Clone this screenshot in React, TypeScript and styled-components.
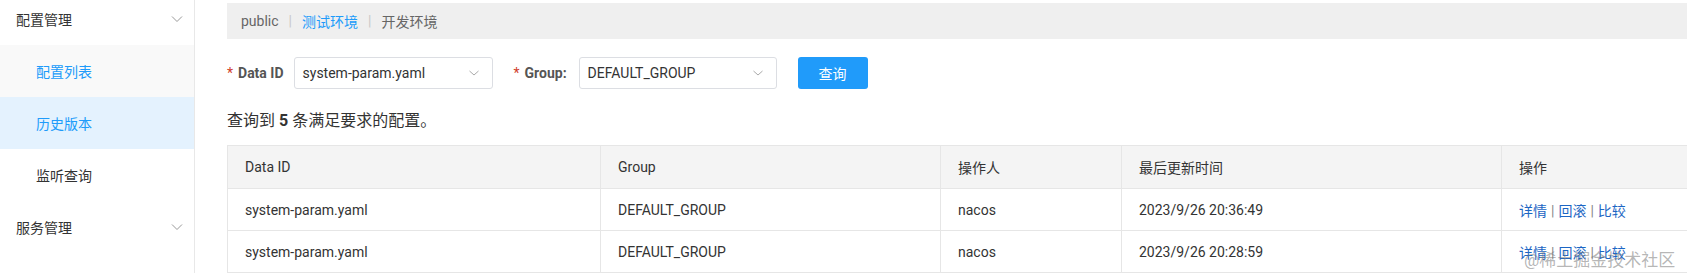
import React from "react";
import styled, { createGlobalStyle } from "styled-components";

const Global = createGlobalStyle`
  html, body { margin: 0; padding: 0; background: #fff; overflow: hidden; }
  body { font-family: Roboto, "Noto Sans CJK SC", sans-serif; color: #333; }
  * { box-sizing: border-box; }
`;

const Page = styled.div`
  position: relative;
  display: flex;
  width: 1740px;
  height: 273px;
  overflow: hidden;
`;

const Sidebar = styled.nav`
  width: 195px;
  flex: none;
  border-right: 1px solid #e8e8e8;
  background: #fff;
`;

const MenuList = styled.ul`
  list-style: none;
  margin: -7px 0 0;
  padding: 0;
`;

const MenuItem = styled.li<{ $sub?: boolean; $active?: boolean; $hover?: boolean }>`
  height: 52px;
  display: flex;
  align-items: center;
  justify-content: space-between;
  padding: 0 11px 0 ${(p) => (p.$sub ? "36px" : "16px")};
  font-size: 14px;
  color: ${(p) => (p.$sub && (p.$active || p.$hover) ? "#209bfa" : "#333")};
  background: ${(p) => (p.$active ? "#e4f2fe" : p.$hover ? "#f9f9f9" : "transparent")};
`;

const Chevron = () => (
  <svg width="12" height="8" viewBox="0 0 12 8" fill="none">
    <path d="M1 1.5 L6 6.5 L11 1.5" stroke="#999" strokeWidth="1" />
  </svg>
);

const Main = styled.main`
  flex: 1;
  padding: 3px 0 0 32px;
  display: flex;
  flex-direction: column;
`;

const Breadcrumb = styled.div`
  height: 40px;
  background: #efefef;
  display: flex;
  align-items: center;
  padding-left: 14px;
  font-size: 14px;
  color: #666;
`;

const Crumb = styled.span<{ $link?: boolean }>`
  color: ${(p) => (p.$link ? "#209bfa" : "#666")};
`;

const Sep = styled.span`
  color: #c8c8c8;
  margin: 0 10px;
`;

const FormRow = styled.div`
  display: flex;
  align-items: center;
  margin-top: 18px;
  height: 32px;
`;

const Label = styled.label<{ $gap: number }>`
  font-size: 14px;
  font-weight: bold;
  color: #555;
  margin-right: ${(p) => p.$gap}px;
  white-space: nowrap;
`;

const Star = styled.span`
  color: #d0402c;
  font-weight: normal;
  margin-right: 5px;
`;

const Select = styled.div<{ $width: number; $after: number }>`
  width: ${(p) => p.$width}px;
  height: 32px;
  border: 1px solid #dcdee3;
  border-radius: 3px;
  display: flex;
  align-items: center;
  justify-content: space-between;
  padding: 0 12px 0 8px;
  font-size: 14px;
  color: #333;
  margin-right: ${(p) => p.$after}px;
`;

const SmallChevron = () => (
  <svg width="12" height="8" viewBox="0 0 12 8" fill="none">
    <path d="M1.5 2 L6 6 L10.5 2" stroke="#aaa" strokeWidth="1" />
  </svg>
);

const Button = styled.button`
  width: 70px;
  height: 32px;
  border: none;
  border-radius: 3px;
  background: #209bfa;
  color: #fff;
  font-size: 14px;
  font-family: inherit;
  padding: 0;
`;

const Summary = styled.div`
  margin-top: 20px;
  line-height: 24px;
  font-size: 16px;
  color: #333;
`;

const Count = styled.strong`
  font-weight: bold;
  margin: 0 4px;
`;

const Table = styled.table`
  margin-top: 12px;
  width: 100%;
  border-collapse: collapse;
  table-layout: fixed;
  font-size: 14px;
  color: #333;
`;

const Th = styled.th`
  height: 43px;
  background: #f4f4f4;
  border: 1px solid #e6e6e6;
  text-align: left;
  font-weight: normal;
  padding: 0 16px 0 17px;
  color: #333;
`;

const Td = styled.td`
  height: 42px;
  border: 1px solid #e6e6e6;
  padding: 0 16px 0 17px;
  color: #333;
`;

const Link = styled.a`
  color: #1c66c4;
  text-decoration: none;
`;

const LinkSep = styled.span`
  color: #888;
  margin: 0 4px;
`;

const Watermark = styled.div`
  position: absolute;
  left: 1524px;
  bottom: 2px;
  font-size: 17px;
  color: rgba(120, 120, 120, 0.55);
  white-space: nowrap;
  pointer-events: none;
`;

const rows = [
  { id: "system-param.yaml", group: "DEFAULT_GROUP", user: "nacos", time: "2023/9/26 20:36:49" },
  { id: "system-param.yaml", group: "DEFAULT_GROUP", user: "nacos", time: "2023/9/26 20:28:59" },
];

export default function App() {
  return (
    <>
      <Global />
      <Page>
        <Sidebar>
          <MenuList>
            <MenuItem>
              配置管理
              <Chevron />
            </MenuItem>
            <MenuItem $sub $hover>配置列表</MenuItem>
            <MenuItem $sub $active>历史版本</MenuItem>
            <MenuItem $sub>监听查询</MenuItem>
            <MenuItem>
              服务管理
              <Chevron />
            </MenuItem>
          </MenuList>
        </Sidebar>
        <Main>
          <Breadcrumb>
            <Crumb>public</Crumb>
            <Sep>|</Sep>
            <Crumb $link>测试环境</Crumb>
            <Sep>|</Sep>
            <Crumb>开发环境</Crumb>
          </Breadcrumb>
          <FormRow>
            <Label $gap={10}>
              <Star>*</Star>Data ID
            </Label>
            <Select $width={199} $after={21}>
              system-param.yaml
              <SmallChevron />
            </Select>
            <Label $gap={12}>
              <Star>*</Star>Group:
            </Label>
            <Select $width={198} $after={21}>
              DEFAULT_GROUP
              <SmallChevron />
            </Select>
            <Button>查询</Button>
          </FormRow>
          <Summary>
            查询到<Count>5</Count>条满足要求的配置。
          </Summary>
          <Table>
            <colgroup>
              <col style={{ width: 373 }} />
              <col style={{ width: 340 }} />
              <col style={{ width: 181 }} />
              <col style={{ width: 380 }} />
              <col />
            </colgroup>
            <thead>
              <tr>
                <Th>Data ID</Th>
                <Th>Group</Th>
                <Th>操作人</Th>
                <Th>最后更新时间</Th>
                <Th>操作</Th>
              </tr>
            </thead>
            <tbody>
              {rows.map((r, i) => (
                <tr key={i}>
                  <Td>{r.id}</Td>
                  <Td>{r.group}</Td>
                  <Td>{r.user}</Td>
                  <Td>{r.time}</Td>
                  <Td>
                    <Link>详情</Link>
                    <LinkSep>|</LinkSep>
                    <Link>回滚</Link>
                    <LinkSep>|</LinkSep>
                    <Link>比较</Link>
                  </Td>
                </tr>
              ))}
            </tbody>
          </Table>
        </Main>
        <Watermark>@稀土掘金技术社区</Watermark>
      </Page>
    </>
  );
}
